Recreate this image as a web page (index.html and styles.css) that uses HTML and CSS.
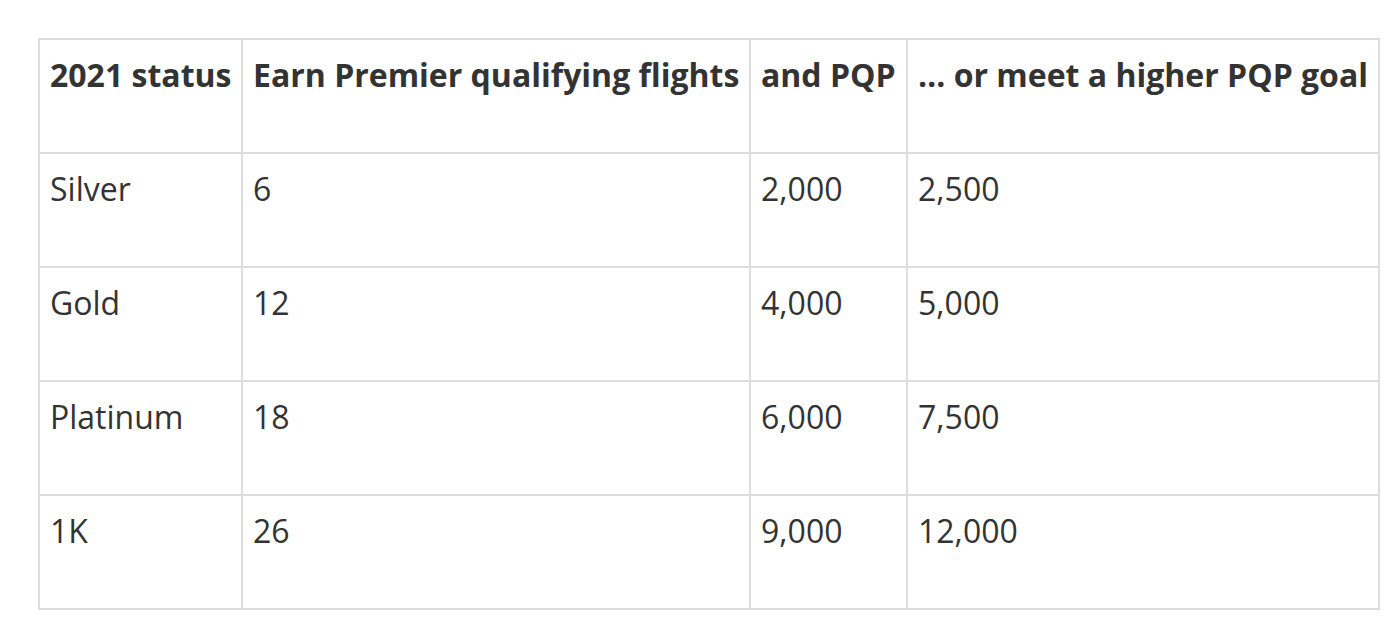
FILE: index.html
```html
<!DOCTYPE html>
<html lang="en">
<head>
<meta charset="utf-8">
<title>2021 status</title>
<link rel="stylesheet" href="styles.css">
</head>
<body>
<div class="wrap">
<table class="status-table">
  <colgroup>
    <col class="c1"><col class="c2"><col class="c3"><col class="c4">
  </colgroup>
  <thead>
    <tr>
      <th>2021 status</th>
      <th>Earn Premier qualifying flights</th>
      <th>and PQP</th>
      <th>… or meet a higher PQP goal</th>
    </tr>
  </thead>
  <tbody>
    <tr><td>Silver</td><td>6</td><td>2,000</td><td>2,500</td></tr>
    <tr><td>Gold</td><td>12</td><td>4,000</td><td>5,000</td></tr>
    <tr><td>Platinum</td><td>18</td><td>6,000</td><td>7,500</td></tr>
    <tr><td>1K</td><td>26</td><td>9,000</td><td>12,000</td></tr>
  </tbody>
</table>
</div>
</body>
</html>
```
FILE: styles.css
```css
html, body {
  margin: 0;
  padding: 0;
  background: #fff;
}
.wrap {
  padding: 38px 0 0 38px;
}
.status-table {
  border-collapse: collapse;
  table-layout: fixed;
  width: 1340px;
  font-family: "Open Sans", "Liberation Sans", sans-serif;
  font-size: 32px;
  line-height: 48px;
  color: #333;
}
.c1 { width: 203px; }
.c2 { width: 508px; }
.c3 { width: 157px; }
.c4 { width: 472px; }
.status-table th,
.status-table td {
  border: 2px solid #ddd;
  padding: 11px 10px 53px 10px;
  text-align: left;
  vertical-align: top;
  white-space: nowrap;
  height: 48px;
}
.status-table th {
  font-weight: 700;
}
.status-table td {
  font-weight: 400;
}
```
